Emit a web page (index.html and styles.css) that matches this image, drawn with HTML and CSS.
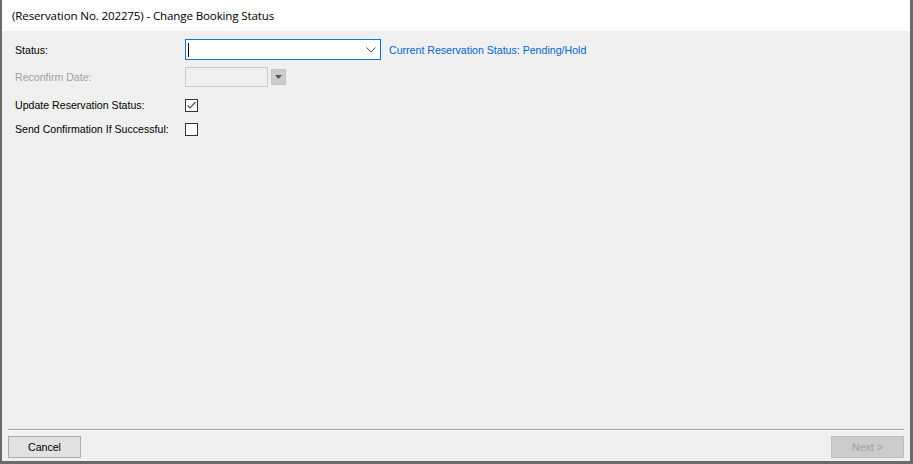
FILE: index.html
```html
<!DOCTYPE html>
<html>
<head>
<meta charset="utf-8">
<link rel="stylesheet" href="styles.css">
</head>
<body>
<div class="window">
  <div class="header">(Reservation No. 202275) - Change Booking Status</div>
  <div class="content">
    <div class="row r-status">
      <div class="label">Status:</div>
      <div class="combo"><span class="caret"></span>
        <svg class="chev" width="10" height="6" viewBox="0 0 10 6"><path d="M0.5 0.5 L5 5 L9.5 0.5" fill="none" stroke="#444" stroke-width="1"/></svg>
      </div>
      <div class="current">Current Reservation Status: Pending/Hold</div>
    </div>
    <div class="row r-date">
      <div class="label disabled">Reconfirm Date:</div>
      <div class="datebox"></div>
      <div class="datebtn"><svg width="7" height="4" viewBox="0 0 7 4"><path d="M0 0 H7 L3.5 4 Z" fill="#555"/></svg></div>
    </div>
    <div class="row r-check">
      <div class="label">Update Reservation Status:</div>
      <div class="check"><svg width="13" height="13" viewBox="0 0 13 13"><path d="M2.5 6.5 L5 9 L10.5 3" fill="none" stroke="#555" stroke-width="1.2"/></svg></div>
    </div>
    <div class="row r-check2">
      <div class="label">Send Confirmation If Successful:</div>
      <div class="check"></div>
    </div>
  </div>
  <div class="footer">
    <div class="sep"></div>
    <div class="buttons">
      <button class="btn">Cancel</button>
      <button class="btn disabledbtn">Next &gt;</button>
    </div>
  </div>
</div>
</body>
</html>
```
FILE: styles.css
```css
html, body { margin: 0; padding: 0; }
body { width: 913px; height: 464px; overflow: hidden; background: #f0f0f0; }
.window {
  box-sizing: border-box;
  width: 913px; height: 464px;
  border-left: 2px solid #6a6a6a;
  border-right: 3px solid #6a6a6a;
  border-bottom: 3px solid #6a6a6a;
  background: #f0f0f0;
  display: flex; flex-direction: column;
  font-family: "Liberation Sans", Arial, sans-serif;
  font-size: 10.6px;
  color: #000;
}
.header {
  background: #fff;
  height: 31px;
  box-sizing: border-box;
  padding: 9px 0 0 10px;
  font-family: "Open Sans", "Noto Sans", sans-serif;
  font-size: 11.6px;
  line-height: 14px;
  letter-spacing: -0.15px;
}
.content { flex: 1; padding: 8px 0 0 13px; }
.row { display: flex; align-items: center; }
.label { width: 170px; }
.disabled { color: #a0a0a0; }
.r-status { height: 21px; }
.combo {
  box-sizing: border-box;
  width: 196px; height: 21px;
  border: 1px solid #0078d7;
  background: #fff;
  position: relative;
  display: flex; align-items: center;
}
.caret { width: 1px; height: 14px; background: #000; margin-left: 2px; }
.chev { position: absolute; right: 4px; top: 7px; }
.current { margin-left: 8px; color: #0066cc; }
.r-date { height: 20px; margin-top: 7px; }
.datebox {
  box-sizing: border-box;
  width: 83px; height: 20px;
  border: 1px solid #cccccc;
  background: #f0f0f0;
}
.datebtn {
  box-sizing: border-box;
  width: 15px; height: 16px;
  margin-left: 3px;
  background: #cccccc;
  border: 1px solid #c4c4c4;
  display: flex; align-items: center; justify-content: center;
}
.r-check { height: 14px; margin-top: 11px; }
.r-check2 { height: 14px; margin-top: 10px; }
.check {
  box-sizing: border-box;
  width: 13px; height: 13px;
  border: 1px solid #333;
  background: #fff;
  display: flex;
}
.check svg { margin: -1px; }
.footer { padding: 0 6px 0 6px; }
.sep { height: 1px; background: #a0a0a0; border-bottom: 1px solid #fff; }
.buttons { display: flex; justify-content: space-between; padding: 5px 0 3px 0; }
.btn {
  box-sizing: border-box;
  width: 73px; height: 22px;
  background: #e1e1e1;
  border: 1px solid #adadad;
  font-family: "Liberation Sans", Arial, sans-serif;
  font-size: 10.6px;
  color: #000;
  padding: 0;
}
.disabledbtn { background: #cccccc; border-color: #bfbfbf; color: #a0a0a0; }
```
